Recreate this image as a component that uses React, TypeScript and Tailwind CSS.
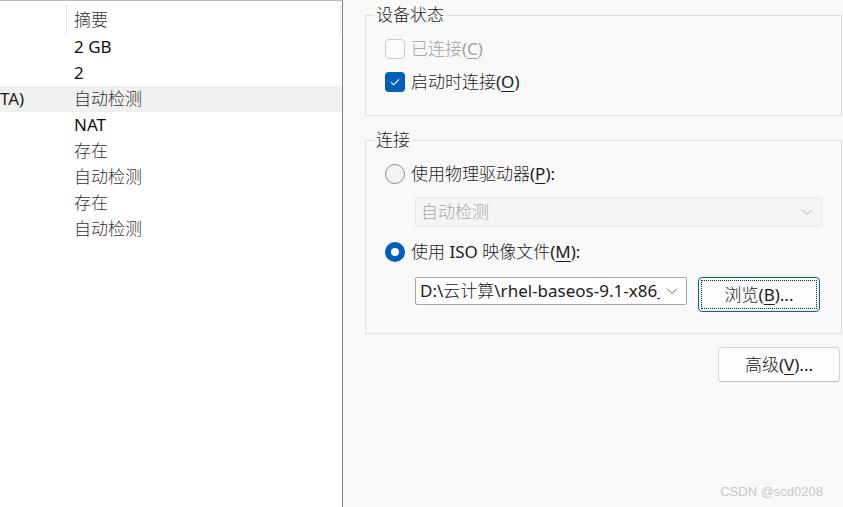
import React from "react";

const FONT = { fontFamily: '"Noto Sans", "Noto Sans CJK SC", sans-serif' };

function U({ children }: { children: React.ReactNode }) {
  return <span className="underline underline-offset-[3px] decoration-[1px]">{children}</span>;
}

function Chevron({ color = "#6b6b6b" }: { color?: string }) {
  return (
    <svg width="12" height="8" viewBox="0 0 12 8" fill="none">
      <path d="M1 1.5l5 5 5-5" stroke={color} strokeWidth="1" />
    </svg>
  );
}

const rows: { left?: string; right: string; hl?: boolean; latin?: boolean }[] = [
  { right: "2 GB", latin: true },
  { right: "2", latin: true },
  { left: "TA)", right: "自动检测", hl: true },
  { right: "NAT", latin: true },
  { right: "存在" },
  { right: "自动检测" },
  { right: "存在" },
  { right: "自动检测" },
];

export default function App() {
  return (
    <div className="relative flex h-[507px] w-[843px] overflow-hidden text-[17px] text-[#1b1b1b]" style={FONT}>
      {/* Left list */}
      <div className="flex h-full w-[343px] shrink-0 flex-col border-r border-t border-r-[#808080] border-t-[#b9b9b9] bg-white">
        <div className="flex h-[33px] shrink-0">
          <div className="h-full w-[67px] shrink-0 pt-[4px]">
            <div className="ml-auto h-[29px] w-px bg-[#e5e5e5]" />
          </div>
          <div className="flex flex-1 items-end pb-[3px] pl-[7px] leading-[22px] font-light text-[#333]">摘要</div>
          <div className="mr-px mt-[4px] h-[29px] w-px bg-[#e5e5e5]" />
        </div>
        {rows.map((r, i) => (
          <div key={i} className={`flex h-[26px] shrink-0 items-center ${r.hl ? "bg-[#f0f0f0]" : ""}`}>
            <div className="w-[74px] shrink-0 overflow-hidden whitespace-nowrap">{r.left ?? ""}</div>
            <div className={r.latin ? "text-[#111]" : "font-light text-[#333]"}>{r.right}</div>
          </div>
        ))}
      </div>

      {/* Right pane */}
      <div className="flex flex-1 flex-col bg-[#f9f9f9] pl-[22px]">
        <fieldset className="mt-[5px] mr-[1px] border border-[#dedede] p-0">
          <legend className="ml-[8px] px-[2px] leading-[20px] font-light">设备状态</legend>
          <div className="flex flex-col gap-[13px] pb-[23px] pl-[19px] pt-[14px]">
            <div className="flex h-[20px] items-center gap-[6px]">
              <div className="h-[20px] w-[20px] rounded-[4px] border border-[#cccccc] bg-[#fbfbfb]" />
              <span className="text-[#a0a0a0]">
                <span className="font-light">已连接</span>(<U>C</U>)
              </span>
            </div>
            <div className="flex h-[20px] items-center gap-[6px]">
              <div className="flex h-[20px] w-[20px] items-center justify-center rounded-[4px] bg-[#005fb8]">
                <svg width="12" height="10" viewBox="0 0 12 10" fill="none">
                  <path d="M2 5.2l2.6 2.6L10 2.4" stroke="white" strokeWidth="1.1" />
                </svg>
              </div>
              <span>
                <span className="font-light">启动时连接</span>(<U>O</U>)
              </span>
            </div>
          </div>
        </fieldset>

        <fieldset className="mt-[14px] mr-[1px] border border-[#dedede] p-0">
          <legend className="ml-[8px] px-[2px] leading-[20px] font-light">连接</legend>
          <div className="flex flex-col pb-[21px] pl-[19px] pr-[19px] pt-[14px]">
            <div className="flex h-[20px] items-center gap-[6px]">
              <div className="h-[20px] w-[20px] rounded-full border border-[#8c8c8c] bg-[#f3f3f3]" />
              <span>
                <span className="font-light">使用物理驱动器</span>(<U>P</U>):
              </span>
            </div>
            <div className="ml-[30px] mt-[13px] flex h-[30px] items-center justify-between rounded-[3px] border border-[#e6e6e6] bg-[#f5f5f5] pl-[5px] pr-[8px] text-[#a5a5a5]">
              <span className="font-light">自动检测</span>
              <Chevron color="#b5b5b5" />
            </div>
            <div className="mt-[15px] flex h-[20px] items-center gap-[6px]">
              <div className="flex h-[20px] w-[20px] items-center justify-center rounded-full bg-[#005fb8]">
                <div className="h-[8px] w-[8px] rounded-full bg-white" />
              </div>
              <span>
                <span className="font-light">使用</span> ISO <span className="font-light">映像文件</span>(<U>M</U>):
              </span>
            </div>
            <div className="ml-[30px] mt-[15px] flex items-start gap-[11px]">
              <div className="flex h-[28px] w-[272px] items-center rounded-[2px] border border-[#a6a6a6] bg-white pl-[4px] pr-[8px]">
                <div className="flex-1 overflow-hidden whitespace-nowrap">
                  D:\<span className="font-light">云计算</span>\rhel-baseos-9.1-x86_64-dvd.iso
                </div>
                <div className="ml-[6px] shrink-0">
                  <Chevron />
                </div>
              </div>
              <div className="flex h-[35px] w-[122px] items-center justify-center rounded-[4px] border border-[#0063b1] bg-[#fdfdfd] p-[2px]">
                <div className="flex h-full w-full items-center justify-center border border-dotted border-[#222]">
                  <span>
                    <span className="font-light">浏览</span>(<U>B</U>)...
                  </span>
                </div>
              </div>
            </div>
          </div>
        </fieldset>

        <div className="mr-[3px] mt-[13px] flex justify-end">
          <div className="flex h-[35px] w-[122px] items-center justify-center rounded-[4px] border border-[#d4d4d4] border-b-[#c0c0c0] bg-[#fdfdfd]">
            <span>
              <span className="font-light">高级</span>(<U>V</U>)...
            </span>
          </div>
        </div>
      </div>

      <div className="absolute bottom-[6px] right-[20px] text-[13px] text-[#c8c8c8]" style={{ fontFamily: '"Liberation Sans", sans-serif' }}>
        CSDN @scd0208
      </div>
    </div>
  );
}
